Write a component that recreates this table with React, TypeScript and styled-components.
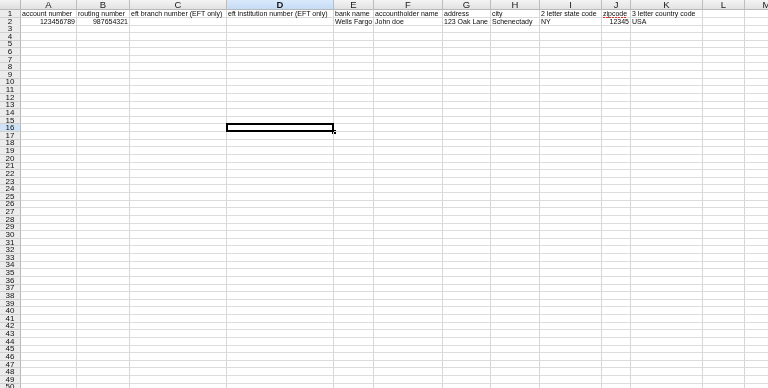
import styled, { createGlobalStyle, css } from "styled-components"

const GlobalStyle = createGlobalStyle`
  html, body {
    margin: 0;
    padding: 0;
    background: #ffffff;
    overflow: hidden;
  }
  body {
    font-family: "Liberation Sans", Arial, sans-serif;
  }
`

const COLUMNS = [
  { key: "A", width: 56 },
  { key: "B", width: 53 },
  { key: "C", width: 97 },
  { key: "D", width: 107 },
  { key: "E", width: 40 },
  { key: "F", width: 69 },
  { key: "G", width: 48 },
  { key: "H", width: 49 },
  { key: "I", width: 62 },
  { key: "J", width: 29 },
  { key: "K", width: 72 },
  { key: "L", width: 42 },
  { key: "M", width: 44 },
]

const ROW_COUNT = 50
const ROW_HEIGHT = 7.625
const SELECTED_COL = "D"
const SELECTED_ROW = 16

type CellValue = { text: string; numeric?: boolean; misspelled?: boolean }

const DATA: Record<number, Record<string, CellValue>> = {
  1: {
    A: { text: "account number" },
    B: { text: "routing number" },
    C: { text: "eft branch number (EFT only)" },
    D: { text: "eft institution number (EFT only)" },
    E: { text: "bank name" },
    F: { text: "accountholder name" },
    G: { text: "address" },
    H: { text: "city" },
    I: { text: "2 letter state code" },
    J: { text: "zipcode", misspelled: true },
    K: { text: "3 letter country code" },
  },
  2: {
    A: { text: "123456789", numeric: true },
    B: { text: "987654321", numeric: true },
    E: { text: "Wells Fargo" },
    F: { text: "John doe" },
    G: { text: "123 Oak Lane" },
    H: { text: "Schenectady" },
    I: { text: "NY" },
    J: { text: "12345", numeric: true },
    K: { text: "USA" },
  },
}

const gridColumns = `21px ${COLUMNS.map((c) => `${c.width}px`).join(" ")}`

const Sheet = styled.div`
  display: flex;
  flex-direction: column;
  width: 768px;
  height: 388px;
  overflow: hidden;
  background: #ffffff;
`

const Row = styled.div<{ $height: number }>`
  display: grid;
  grid-template-columns: ${gridColumns};
  height: ${(p) => p.$height}px;
  flex: none;
`

const Corner = styled.div`
  background: linear-gradient(#f3f3f3, #dedede);
  border-right: 1px solid #b9b9b9;
  border-bottom: 1px solid #b9b9b9;
  box-sizing: border-box;
`

// grayscale text, like the original's anti-aliasing
const Label = styled.span`
  display: inline-block;
  filter: grayscale(1);
`

const ColumnHeader = styled.div<{ $active: boolean }>`
  box-sizing: border-box;
  display: flex;
  align-items: center;
  justify-content: center;
  font-size: 9.5px;
  line-height: 9px;
  color: #1a1a1a;
  border-right: 1px solid #bdbdbd;
  border-bottom: 1px solid #b9b9b9;
  background: linear-gradient(#f4f4f4, #e2e2e2);
  overflow: hidden;
  ${(p) =>
    p.$active &&
    css`
      background: linear-gradient(#d9e9fb, #c4dcf6);
      font-weight: bold;
    `}
`

const RowHeader = styled.div<{ $active: boolean }>`
  box-sizing: border-box;
  display: flex;
  align-items: center;
  justify-content: center;
  font-size: 8px;
  line-height: 7px;
  color: #111111;
  background: #ececec;
  border-right: 1px solid #b9b9b9;
  border-bottom: 1px solid #cfcfcf;
  overflow: hidden;
  ${(p) =>
    p.$active &&
    css`
      background: #cfe3f8;
    `}
`

const Cell = styled.div<{ $numeric?: boolean }>`
  position: relative;
  box-sizing: border-box;
  border-right: 1px solid #d6d6d6;
  border-bottom: 1px solid #dcdcdc;
  font-size: 7px;
  line-height: 7px;
  color: #0a0a0a;
  white-space: nowrap;
  padding: 0 1px;
  text-align: ${(p) => (p.$numeric ? "right" : "left")};
`

const Misspelled = styled.span`
  display: inline-block;
  position: relative;
  &::after {
    content: "";
    position: absolute;
    left: 0;
    right: 0;
    bottom: -1px;
    height: 1px;
    background: repeating-linear-gradient(
      90deg,
      #e0302c 0 2px,
      transparent 2px 3px
    );
  }
`

const Selection = styled.div`
  position: absolute;
  left: -1px;
  top: -1px;
  right: -1px;
  bottom: -1px;
  border: 2px solid #000000;
  pointer-events: none;
`

const FillHandle = styled.div`
  position: absolute;
  right: -4px;
  bottom: -4px;
  width: 4px;
  height: 4px;
  background: #000000;
`

export default function App() {
  const rows = Array.from({ length: ROW_COUNT }, (_, i) => i + 1)
  return (
    <>
      <GlobalStyle />
      <Sheet>
        <Row $height={10}>
          <Corner />
          {COLUMNS.map((c) => (
            <ColumnHeader key={c.key} $active={c.key === SELECTED_COL}>
              <Label>{c.key}</Label>
            </ColumnHeader>
          ))}
        </Row>
        {rows.map((r) => (
          <Row key={r} $height={ROW_HEIGHT}>
            <RowHeader $active={r === SELECTED_ROW}>
              <Label>{r}</Label>
            </RowHeader>
            {COLUMNS.map((c) => {
              const value = DATA[r]?.[c.key]
              const selected = r === SELECTED_ROW && c.key === SELECTED_COL
              return (
                <Cell key={c.key} $numeric={value?.numeric}>
                  {value &&
                    (value.misspelled ? (
                      <Misspelled>
                        <Label>{value.text}</Label>
                      </Misspelled>
                    ) : (
                      <Label>{value.text}</Label>
                    ))}
                  {selected && (
                    <Selection>
                      <FillHandle />
                    </Selection>
                  )}
                </Cell>
              )
            })}
          </Row>
        ))}
      </Sheet>
    </>
  )
}
